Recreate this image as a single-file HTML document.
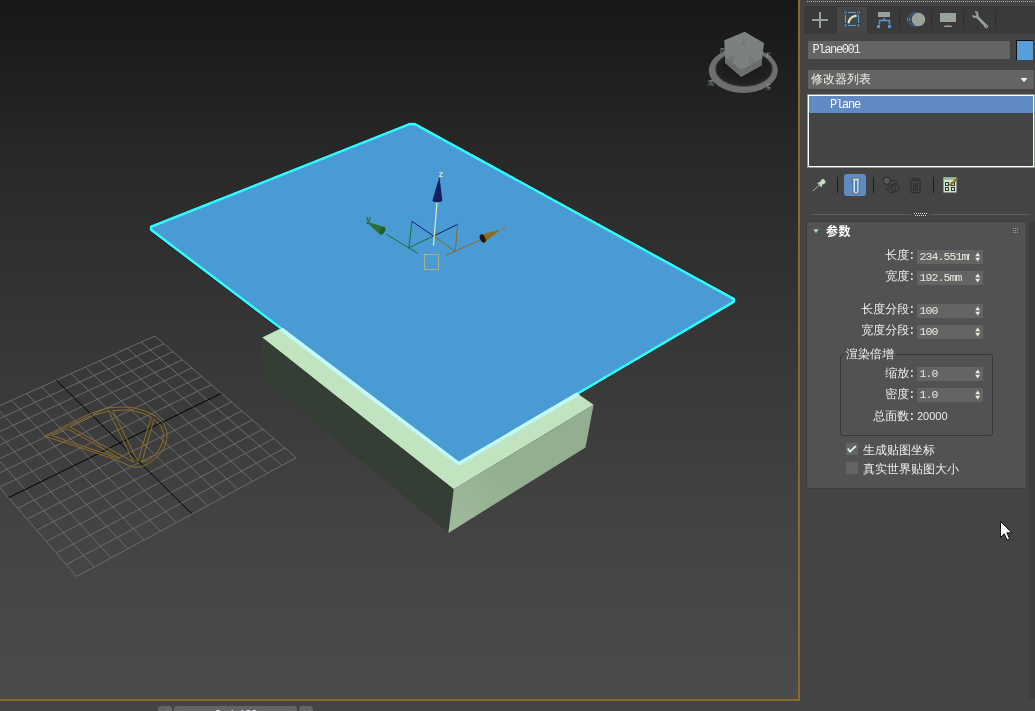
<!DOCTYPE html>
<html lang="zh-CN">
<head>
<meta charset="utf-8">
<title>Plane001 - 参数</title>
<style>
*{box-sizing:border-box;margin:0;padding:0}
html,body{width:1035px;height:711px;overflow:hidden;background:#444;}
body{position:relative;font-family:"Liberation Mono","WenQuanYi Zen Hei","Noto Sans CJK SC",monospace;font-size:12px;color:#e4e4e4;}
.abs{position:absolute}
#vp{position:absolute;left:0;top:0;width:798px;height:699px;background:linear-gradient(to bottom,#171717 0%,#2a2a2a 25%,#373737 50%,#434343 75%,#4b4b4b 100%);overflow:hidden}
#vp svg{position:absolute;left:0;top:0;will-change:transform}
#goldr{position:absolute;left:798px;top:0;width:2px;height:701px;background:#8a6a26}
#goldb{position:absolute;left:0;top:699px;width:800px;height:2px;background:#8a6a26}
#panel{position:absolute;left:800px;top:0;width:235px;height:711px;background:transparent;will-change:transform}
.t{position:absolute;white-space:nowrap;line-height:14px;height:14px}
.lat{font-family:"Liberation Mono",monospace;font-size:12px;letter-spacing:-1.2px}
.cjk{font-family:"Liberation Sans","WenQuanYi Zen Hei","Noto Sans CJK SC",sans-serif;font-size:12px}
.field{position:absolute;background:#646464;height:14px;width:66px;border-radius:1px}
.field .t{color:#e4ecdc;font-size:11.5px;letter-spacing:-0.9px}
.lbl .lat{margin-left:-1px}
.lbl{position:absolute;text-align:right;white-space:nowrap;line-height:14px;height:14px;color:#ececec}
</style>
</head>
<body>
<div id="vp">
<svg width="798" height="699" viewBox="0 0 798 699">
<g id="grid">
<path d="M154.8 336.0L-51.3 428.6 M154.8 336.0L296.2 457.7 M163.8 343.8L-43.2 438.0 M141.2 342.1L281.9 465.4 M173.0 351.7L-35.0 447.5 M127.5 348.2L267.5 473.2 M182.3 359.8L-26.6 457.2 M113.7 354.5L252.8 481.2 M191.8 367.9L-18.0 467.0 M99.6 360.8L238.0 489.2 M201.5 376.2L-9.3 477.1 M85.4 367.2L222.9 497.4 M211.3 384.7L-0.5 487.3 M71.0 373.6L207.6 505.6 M231.4 402.0L17.7 508.3 M41.6 386.8L176.4 522.6 M241.8 410.9L27.1 519.1 M26.7 393.6L160.4 531.2 M252.3 419.9L36.7 530.2 M11.5 400.4L144.2 540.0 M263.0 429.1L46.4 541.4 M-3.9 407.3L127.7 548.9 M273.8 438.5L56.3 552.9 M-19.5 414.3L111.0 557.9 M284.9 448.0L66.4 564.5 M-35.3 421.4L94.0 567.1 M296.2 457.7L76.7 576.5 M-51.3 428.6L76.7 576.5" stroke="#707070" stroke-width="0.9" fill="none"/>
<path d="M221.3 393.3L8.5 497.7 M56.4 380.2L192.1 514.0" stroke="#000" stroke-width="1" fill="none"/>
</g>
<path d="M44.5 436.3 L66.1 425.4 L86.4 415.3 L98.6 410.6 L108.0 407.8 L121.6 406.9 L133.7 407.8 L145.9 411.2 L156.7 416.6 L163.5 423.4 L166.9 431.5 L166.9 439.6 L163.5 449.1 L156.7 457.2 L148.6 463.3 L141.9 466.7 L135.1 467.4 L128.3 465.3 L116.2 459.9 L89.1 450.5 L62.1 441.7Z M51.9 435.6 L116.2 457.5 M51.9 435.6 L67.5 428.8 L120.2 458.6 M70.2 427.2 L94.5 415.0 L108.7 411.2 L133.7 462.2 L70.2 427.2 M112.8 410.6 L129.7 409.9 L143.2 413.3 L151.3 417.3 L137.8 461.3Z M154.0 419.3 L160.8 426.1 L163.5 432.9 L162.8 441.0 L159.4 449.1 L154.0 455.9 L147.3 460.6 L141.9 462.0Z" stroke="#8f6e25" stroke-width="1" fill="none" stroke-linejoin="round"/>
<!-- box -->
<polygon points="262.2,337.5 400,270 593.6,404.8 453.8,489.3" fill="#c1e3bf"/>
<polygon points="262.2,337.5 453.8,489.3 448.4,532.9 262,379.2" fill="#353e35"/>
<linearGradient id="rf" gradientUnits="userSpaceOnUse" x1="449" y1="525" x2="500" y2="470"><stop offset="0" stop-color="#a0bb9c"/><stop offset="1" stop-color="#93ae90"/></linearGradient>
<polygon points="453.8,489.3 593.6,404.8 585.5,447.5 448.4,532.9" fill="url(#rf)"/>
<!-- plane -->
<clipPath id="boxclip"><polygon points="262.2,337.5 281,328.7 400,270 578.7,394.1 593.6,404.8 453.8,489.3"/></clipPath>
<polygon points="409.4,124.1 414.9,124.1 733.8,298.9 733.8,301.8 460,462.8 457.9,462.8 151,229.7 151,226.8" fill="none" stroke="#1c0a0a" stroke-width="3.6" stroke-linejoin="round"/>
<polyline points="151,229.7 457.9,462.8 460,462.8 733.8,301.8" fill="none" stroke="#c6fbfb" stroke-width="4.6" clip-path="url(#boxclip)"/>
<polygon points="409.4,124.1 414.9,124.1 733.8,298.9 733.8,301.8 460,462.8 457.9,462.8 151,229.7 151,226.8" fill="#4a9ad4" stroke="#2ffcfc" stroke-width="2.6" stroke-linejoin="round"/>
<polyline points="151,229.7 457.9,462.8 460,462.8 733.8,301.8" fill="none" stroke="#c6fbfb" stroke-width="3" clip-path="url(#boxclip)"/>
<!-- gizmo -->
<g fill="none" stroke-width="1">
<path d="M417.8 253.3L386.3 234.3M408.9 247.8L433.5 236M408.9 247.8L411.9 221.3" stroke="#1f6e2a"/>
<path d="M411.9 221.3L433.5 236L457.7 224.4" stroke="#14206a"/>
<path d="M457.7 224.4L455.2 251.4L433.5 236M446.3 255.3L480.7 239.6" stroke="#8a6a1e"/>
<path d="M437 202.8L433.5 245.5" stroke="#e6ecb8" stroke-width="1.2"/>
<rect x="424.5" y="254.5" width="14" height="15" stroke="#a8b08a"/>
</g>
<polygon points="439.4,176.6 442.3,200 432.5,200.4" fill="#131e63"/>
<ellipse cx="437.4" cy="200.4" rx="4.9" ry="1.6" fill="#131e63"/>
<polygon points="500.4,229.7 484.6,242.4 480.8,234.6" fill="#8d6b1f"/>
<ellipse cx="482.7" cy="238.6" rx="2.6" ry="4.4" transform="rotate(-25 482.7 238.6)" fill="#1c1a14"/>
<polygon points="365.6,221.3 384.6,227.2 380,234.4" fill="#2a7030"/>
<ellipse cx="382.3" cy="230.8" rx="2.6" ry="4.3" transform="rotate(30 382.3 230.8)" fill="#235f29"/>
<g font-family="Liberation Sans, sans-serif" font-size="9" font-weight="bold">
<text x="438.8" y="176.5" fill="#d8dcae">z</text>
<text x="501.5" y="231" fill="#8a7f66">x</text>
<text x="366" y="221.5" fill="#2f6a3a">y</text>
</g>
<!-- viewcube -->
<g>
<ellipse cx="743.3" cy="70.3" rx="34.5" ry="22.6" fill="#6e7070"/>
<radialGradient id="vcg" cx="0.5" cy="0.35" r="0.7"><stop offset="0" stop-color="#161616"/><stop offset="0.7" stop-color="#1f1f1f"/><stop offset="1" stop-color="#2c2c2c"/></radialGradient><ellipse cx="744" cy="69" rx="28.6" ry="17.6" fill="url(#vcg)"/>
<ellipse cx="744" cy="69" rx="28.3" ry="17.3" fill="none" stroke="#454747" stroke-width="0.8"/>
<polygon points="724.3,40.2 744.7,31.8 764,43 761.4,65.6 741.2,76.8 725.2,63" fill="#7d8081"/>
<polygon points="724.9,57 741.2,69.5 762.3,58.5 761.4,65.6 741.2,76.8 725.2,63" fill="#6b6d6d"/>
<g font-family="Liberation Sans, 'Noto Sans CJK SC', sans-serif" font-size="6.5" fill="#65696a">
<text x="740" y="44.5" transform="rotate(8 743 42)">上</text><text x="728.5" y="60.5">前</text><text x="748" y="62.5">右</text>
<g fill="#a4bca4" fill-opacity="0.8" font-size="6"><text x="708" y="84.5">南</text><text x="765.5" y="88.5">东</text><text x="720" y="52" font-size="5">西</text><text x="766" y="55.5" font-size="5">北</text></g>
</g>
</g>

</svg>
</div>
<div id="goldr"></div><div id="goldb"></div>
<div id="panel">

<!-- top dotted line -->
<div class="abs" style="left:7px;top:1px;width:228px;height:1px;background:repeating-linear-gradient(to right,#aab8aa 0,#aab8aa 1px,transparent 1px,transparent 2px)"></div>
<!-- tab bar -->
<div class="abs" style="left:4px;top:6px;width:231px;height:28px;background:#3a3a3a"></div>
<div class="abs" style="left:37px;top:7px;width:30px;height:27px;background:#464646"></div>
<div class="abs" style="left:99px;top:10px;width:1px;height:19px;background:#2e2e2e"></div>
<div class="abs" style="left:131px;top:10px;width:1px;height:19px;background:#2e2e2e"></div>
<div class="abs" style="left:163px;top:10px;width:1px;height:19px;background:#2e2e2e"></div>
<div class="abs" style="left:195px;top:10px;width:1px;height:19px;background:#2e2e2e"></div>
<svg class="abs" style="left:0;top:0" width="235" height="40" viewBox="800 0 235 40">
<!-- plus -->
<rect x="812" y="19" width="16" height="2" fill="#98a39a"/><rect x="819" y="12" width="2" height="16" fill="#98a39a"/>
<!-- modify -->
<g fill="#4da3dc" stroke="#3a3230" stroke-width="0.6">
<rect x="844" y="11" width="3" height="3"/><rect x="857" y="11" width="3" height="3"/><rect x="844" y="24" width="3" height="3"/><rect x="857" y="24" width="3" height="3"/>
</g>
<path d="M848 12.5H856M848 25.5H856M845.5 15V23M858.5 15V23" fill="none" stroke="#4da3dc" stroke-width="1.1"/>
<g fill="#2a3a48"><rect x="845" y="12" width="1" height="1"/><rect x="858" y="12" width="1" height="1"/><rect x="845" y="25" width="1" height="1"/><rect x="858" y="25" width="1" height="1"/></g>
<path d="M848.6 23.4Q849.2 16.4 856.6 15.6" fill="none" stroke="#d4e8cc" stroke-width="2.1"/>
<!-- hierarchy -->
<rect x="878" y="12" width="12" height="5" fill="#98a39a"/>
<path d="M884 18V20.5M879.5 24.5V20.6H889.5V24.5" fill="none" stroke="#5596d6" stroke-width="1.5"/>
<rect x="877" y="25" width="3" height="3" fill="#5596d6"/><rect x="888" y="25" width="3" height="3" fill="#5596d6"/>
<!-- motion -->
<circle cx="914.2" cy="19.5" r="6.6" fill="none" stroke="#3b70b0" stroke-width="0.7"/>
<circle cx="916.3" cy="19.5" r="6.6" fill="none" stroke="#3b70b0" stroke-width="0.7"/>
<path d="M907.6 18V21M909.7 18V21" stroke="#4f8fe0" stroke-width="0.9" fill="none"/>
<circle cx="918.4" cy="19.5" r="6.8" fill="#98a39a"/>
<!-- display -->
<rect x="940" y="13" width="16" height="9" fill="#98a39a"/><rect x="944" y="25.7" width="8" height="1.3" fill="#98a39a"/><rect x="946.3" y="25" width="3.5" height="0.8" fill="#7f8a82"/>
<!-- wrench -->
<path d="M977 16.6L986 26" stroke="#98a39a" stroke-width="2.7" stroke-linecap="round" fill="none"/>
<path d="M975.2 12.1A2.4 2.4 0 1 1 972.9 15.4" stroke="#98a39a" stroke-width="2" fill="none"/>
<circle cx="986.3" cy="26.3" r="1.9" fill="#98a39a"/><circle cx="986.4" cy="26.4" r="0.65" fill="#3a3a3a"/>
</svg>
<!-- name field -->
<div class="abs" style="left:8px;top:41px;width:202px;height:18px;background:#646464;border-radius:1px"><span class="t lat" style="left:4.5px;top:2px;color:#eef0e6;letter-spacing:-1.35px">Plane001</span></div>
<div class="abs" style="left:216px;top:40px;width:17px;height:20px;background:#579dd7;border-left:1px solid #111;border-top:1px solid #111"></div>
<!-- modifier list dropdown -->
<div class="abs" style="left:8px;top:70px;width:226px;height:19px;background:#646464;border-radius:1px"><span class="t cjk" style="left:3px;top:2px;color:#eef0e6">修改器列表</span>
<svg class="abs" style="left:212px;top:7px" width="8" height="6"><path d="M0.5 1H7.5L4 5.3Z" fill="#eef2e8"/></svg></div>
<!-- stack -->
<div class="abs" style="left:7px;top:94px;width:228px;height:74px;background:#444;border:1px solid #8a988c;box-shadow:inset 0 0 0 1px #fff"></div>
<div class="abs" style="left:9px;top:96px;width:224px;height:17px;background:#5f8ac4"><span class="t lat" style="left:21px;top:2px;color:#fff">Plane</span></div>
<!-- button row -->
<svg class="abs" style="left:0;top:170px" width="235" height="30" viewBox="800 170 235 30">
<!-- pin -->
<path d="M812.8 191L819.3 185.2" stroke="#a4c4a4" stroke-width="0.9" fill="none"/>
<path d="M817.4 183.1L818.1 182.5L820.1 182.1L820.8 180.5L822.6 178.8Q824.8 179.2 825.8 182.2L824 183.9L822.2 184.5L821.9 186.6L821.2 187.2Z" fill="#c0e2c2"/>
<path d="M817.6 182.8L821.6 186.9" stroke="#9cc09e" stroke-width="1" fill="none"/>
<rect x="837" y="177" width="1" height="16" fill="#1c1c1c"/>
<rect x="844" y="174" width="22" height="22" rx="3" fill="#5f8ac4"/>
<path d="M851.8 178H860.2V180.2H859.2V192Q859.2 194.2 856 194.2Q852.8 194.2 852.8 192V180.2H851.8Z" fill="#2e3a4a"/>
<path d="M852.3 178.5H859.7V179.8H858.7V191.8Q858.7 193.7 856 193.7Q853.3 193.7 853.3 191.8V179.8H852.3Z" fill="#dfe3cc"/>
<rect x="855" y="180.3" width="2.2" height="12" fill="#2f8be0"/>
<rect x="873" y="177" width="1" height="16" fill="#1c1c1c"/>
<!-- make unique (disabled) -->
<circle cx="886.8" cy="180.8" r="3.6" fill="#555" stroke="#303030" stroke-width="1.2"/>
<circle cx="891.5" cy="189" r="3.8" fill="none" stroke="#303030" stroke-width="1.2"/>
<circle cx="895" cy="188" r="3.8" fill="none" stroke="#303030" stroke-width="1.2"/>
<path d="M891 180.5H896V184M894.5 183L896 185L897.5 183" fill="none" stroke="#333" stroke-width="1"/>
<!-- trash -->
<path d="M910 180.5H921M912.5 180V178.5H918.5V180M911 181.5V191.5Q911 192.5 912 192.5H919Q920 192.5 920 191.5V181.5M913.6 183V191M915.5 183V191M917.4 183V191" fill="none" stroke="#303030" stroke-width="1.25"/>
<rect x="933" y="177" width="1" height="16" fill="#1c1c1c"/>
<!-- configure -->
<rect x="943.5" y="177.5" width="13" height="15" fill="#cfe4cc"/>
<rect x="943.5" y="177.5" width="13" height="2.5" fill="#9fb89f"/>
<g fill="#cfe4cc" stroke="#333" stroke-width="1"><rect x="945.5" y="182.5" width="3" height="3"/><rect x="951.5" y="182.5" width="3" height="3"/><rect x="945.5" y="187.5" width="3" height="3"/><rect x="951.5" y="187.5" width="3" height="3"/></g>
<path d="M949.5 185.5L957.5 178.5" stroke="#8f6a1f" stroke-width="2.2" fill="none"/>
</svg>
<!-- separator -->
<div class="abs" style="left:12px;top:214px;width:99px;height:1px;background:#5e5e5e"></div>
<div class="abs" style="left:131px;top:214px;width:98px;height:1px;background:#5e5e5e"></div>
<div class="abs" style="left:114px;top:213px;width:14px;height:1px;background:repeating-linear-gradient(to right,#dcdcdc 0,#dcdcdc 1px,transparent 1px,transparent 2px)"></div>
<div class="abs" style="left:115px;top:215px;width:12px;height:1px;background:repeating-linear-gradient(to right,#dcdcdc 0,#dcdcdc 1px,transparent 1px,transparent 2px)"></div>
<!-- scrollbar strip -->
<div class="abs" style="left:229px;top:221px;width:9px;height:478px;background:#3d3d3d;border-radius:3px"></div>
<!-- rollout -->
<div class="abs" id="roll" style="left:6px;top:221px;width:221px;height:268px;background:#525252;border:1px solid #3d3d3d;border-radius:3px">
</div>

<svg class="abs" style="left:13px;top:229px" width="7" height="5"><path d="M0.3 0.3H5.7L3 4.3Z" fill="#9cd6aa"/></svg>
<div class="t" style="left:26px;top:224px;font-family:'Noto Sans CJK SC',sans-serif;font-size:12px;font-weight:bold;letter-spacing:0.5px;color:#fff">参数</div>
<div class="abs" style="left:213px;top:228px;width:5px;height:5px;background:radial-gradient(circle at 0.5px 0.5px,#98a698 0.55px,transparent 0.75px);background-size:2px 2px"></div>
<div class="lbl" style="right:120.7px;top:248px"><span class="cjk">长度</span><span class="lat">:</span></div><div class="field" style="left:117px;top:250px"><span class="t lat" style="left:2.5px;top:0px;width:50.5px;overflow:hidden">234.551mm</span>
<svg class="abs" style="left:58px;top:2px" width="6" height="10"><path d="M0.2 4.2L2.7 0.6L5.2 4.2ZM0.2 5.8L2.7 9.4L5.2 5.8Z" fill="#e0f0dc"/></svg></div><div class="lbl" style="right:120.7px;top:269px"><span class="cjk">宽度</span><span class="lat">:</span></div><div class="field" style="left:117px;top:271px"><span class="t lat" style="left:2.5px;top:0px;width:50.5px;overflow:hidden">192.5mm</span>
<svg class="abs" style="left:58px;top:2px" width="6" height="10"><path d="M0.2 4.2L2.7 0.6L5.2 4.2ZM0.2 5.8L2.7 9.4L5.2 5.8Z" fill="#e0f0dc"/></svg></div><div class="lbl" style="right:120.7px;top:302px"><span class="cjk">长度分段</span><span class="lat">:</span></div><div class="field" style="left:117px;top:304px"><span class="t lat" style="left:2.5px;top:0px;width:50.5px;overflow:hidden">100</span>
<svg class="abs" style="left:58px;top:2px" width="6" height="10"><path d="M0.2 4.2L2.7 0.6L5.2 4.2ZM0.2 5.8L2.7 9.4L5.2 5.8Z" fill="#e0f0dc"/></svg></div><div class="lbl" style="right:120.7px;top:323px"><span class="cjk">宽度分段</span><span class="lat">:</span></div><div class="field" style="left:117px;top:325px"><span class="t lat" style="left:2.5px;top:0px;width:50.5px;overflow:hidden">100</span>
<svg class="abs" style="left:58px;top:2px" width="6" height="10"><path d="M0.2 4.2L2.7 0.6L5.2 4.2ZM0.2 5.8L2.7 9.4L5.2 5.8Z" fill="#e0f0dc"/></svg></div><div class="abs" style="left:40px;top:354px;width:153px;height:82px;border:1px solid #383838;border-radius:3px"></div>
<div class="t cjk" style="left:44px;top:347px;background:#525252;padding:0 2px;color:#ececec">渲染倍增</div>
<div class="lbl" style="right:120.7px;top:366px"><span class="cjk">缩放</span><span class="lat">:</span></div><div class="field" style="left:117px;top:367px"><span class="t lat" style="left:2.5px;top:0px;width:50.5px;overflow:hidden">1.0</span>
<svg class="abs" style="left:58px;top:2px" width="6" height="10"><path d="M0.2 4.2L2.7 0.6L5.2 4.2ZM0.2 5.8L2.7 9.4L5.2 5.8Z" fill="#e0f0dc"/></svg></div><div class="lbl" style="right:120.7px;top:387px"><span class="cjk">密度</span><span class="lat">:</span></div><div class="field" style="left:117px;top:388px"><span class="t lat" style="left:2.5px;top:0px;width:50.5px;overflow:hidden">1.0</span>
<svg class="abs" style="left:58px;top:2px" width="6" height="10"><path d="M0.2 4.2L2.7 0.6L5.2 4.2ZM0.2 5.8L2.7 9.4L5.2 5.8Z" fill="#e0f0dc"/></svg></div><div class="lbl" style="right:120.7px;top:409px"><span class="cjk">总面数</span><span class="lat">:</span></div><div class="t lat" style="left:117px;top:409px;color:#ececec;font-family:'Liberation Sans',sans-serif;letter-spacing:0;font-size:11px">20000</div>
<div class="abs" style="left:46px;top:443px;width:12px;height:12px;background:#646464;border-radius:1px"></div>
<svg class="abs" style="left:46px;top:443px" width="12" height="12"><path d="M1.8 5.4L4 8.6L9.8 3" fill="none" stroke="#dcf0dc" stroke-width="1.8"/></svg>
<div class="t cjk" style="left:63px;top:443px;color:#ececec">生成贴图坐标</div>
<div class="abs" style="left:46px;top:462px;width:12px;height:12px;background:#646464;border-radius:1px"></div>
<div class="t cjk" style="left:63px;top:462px;color:#ececec">真实世界贴图大小</div>
<!-- cursor -->
<svg class="abs" style="left:199px;top:520px" width="16" height="22"><path d="M1.5 1.5V17.5L5.3 13.8L8 20L10.6 18.9L7.9 12.8H13Z" fill="#fff" stroke="#111" stroke-width="1"/></svg>

</div>

<div class="abs" style="left:158px;top:706px;width:14px;height:10px;background:#646464;border-radius:3px"></div>
<div class="abs" style="left:174px;top:706px;width:123px;height:10px;background:#646464;border-radius:3px;text-align:center"><span class="lat" style="position:relative;top:3px;color:#eee;line-height:12px;display:inline-block">0 / 100</span></div>
<div class="abs" style="left:299px;top:706px;width:14px;height:10px;background:#646464;border-radius:3px"></div>
<div class="abs lat" style="left:162px;top:709px;color:#eee;line-height:12px">&lt;</div>
<div class="abs lat" style="left:303px;top:709px;color:#eee;line-height:12px">&gt;</div>

</body>
</html>
